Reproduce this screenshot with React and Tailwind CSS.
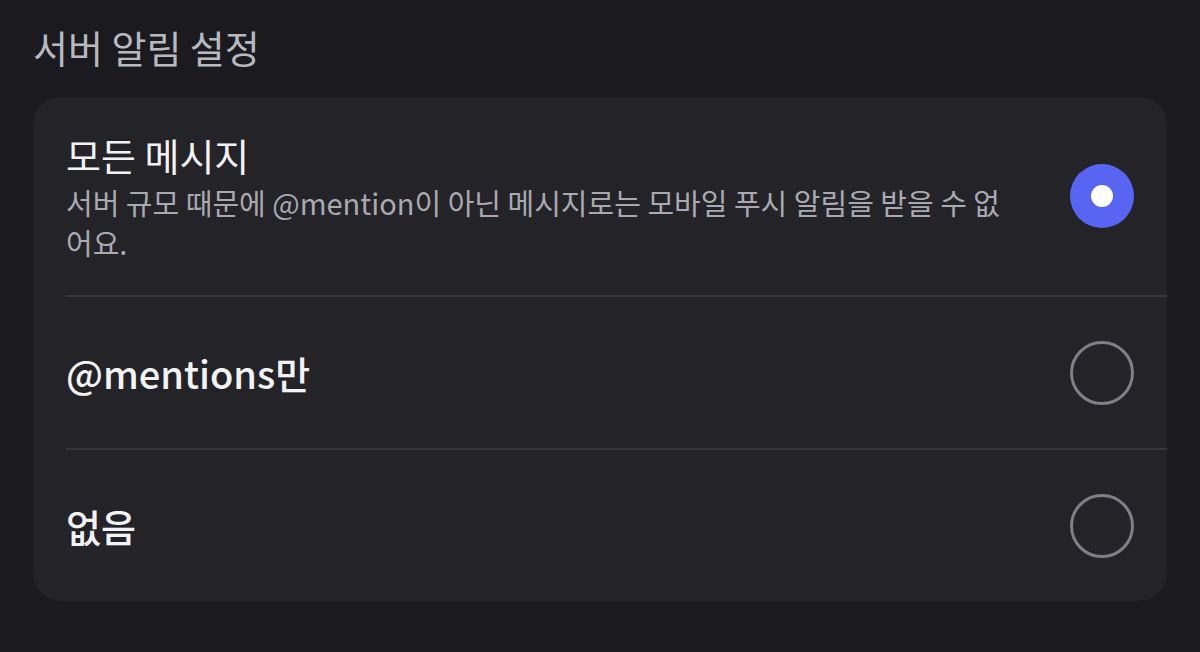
import React from 'react';

const FONT = { fontFamily: '"Noto Sans CJK KR", "Noto Sans", sans-serif' };

const options = [
  {
    label: '모든 메시지',
    desc: '서버 규모 때문에 @mention이 아닌 메시지로는 모바일 푸시 알림을 받을 수 없어요.',
    checked: true,
    weight: 'font-normal',
  },
  { label: '@mentions만', checked: false, weight: 'font-medium' },
  { label: '없음', checked: false, weight: 'font-medium' },
];

function Radio({ checked }) {
  if (checked) {
    return (
      <div className="w-16 h-16 rounded-full bg-[#5865f2] flex items-center justify-center shrink-0">
        <div className="w-[22px] h-[22px] rounded-full bg-white" />
      </div>
    );
  }
  return <div className="w-16 h-16 rounded-full border-[3px] border-[#7f7f86] shrink-0" />;
}

export default function App() {
  return (
    <div className="w-[1200px] h-[652px] bg-[#1b1a1f] px-[33px] pt-[22px] overflow-hidden" style={FONT}>
      <h1 className="text-[38px] leading-[50px] text-[#b8b8bf] font-normal">서버 알림 설정</h1>

      <div className="mt-[25px] bg-[#232328] rounded-[28px] overflow-hidden">
        {options.map((opt, i) => (
          <div key={opt.label}>
            {i > 0 && <div className="ml-[33px] h-[2px] bg-[#36363c]" />}
            <div
              className={`flex items-center justify-between pl-[33px] pr-[33px] ${
                i === 0 ? 'h-[198px]' : 'h-[151px]'
              }`}
            >
              <div className="w-[945px]">
                <div className={`text-[38px] leading-[48px] text-[#f3f3f6] ${opt.weight}`}>{opt.label}</div>
                {opt.desc && (
                  <div className="mt-[3px] text-[29px] leading-[40px] text-[#a9a9b1]">{opt.desc}</div>
                )}
              </div>
              <Radio checked={opt.checked} />
            </div>
          </div>
        ))}
      </div>
    </div>
  );
}
